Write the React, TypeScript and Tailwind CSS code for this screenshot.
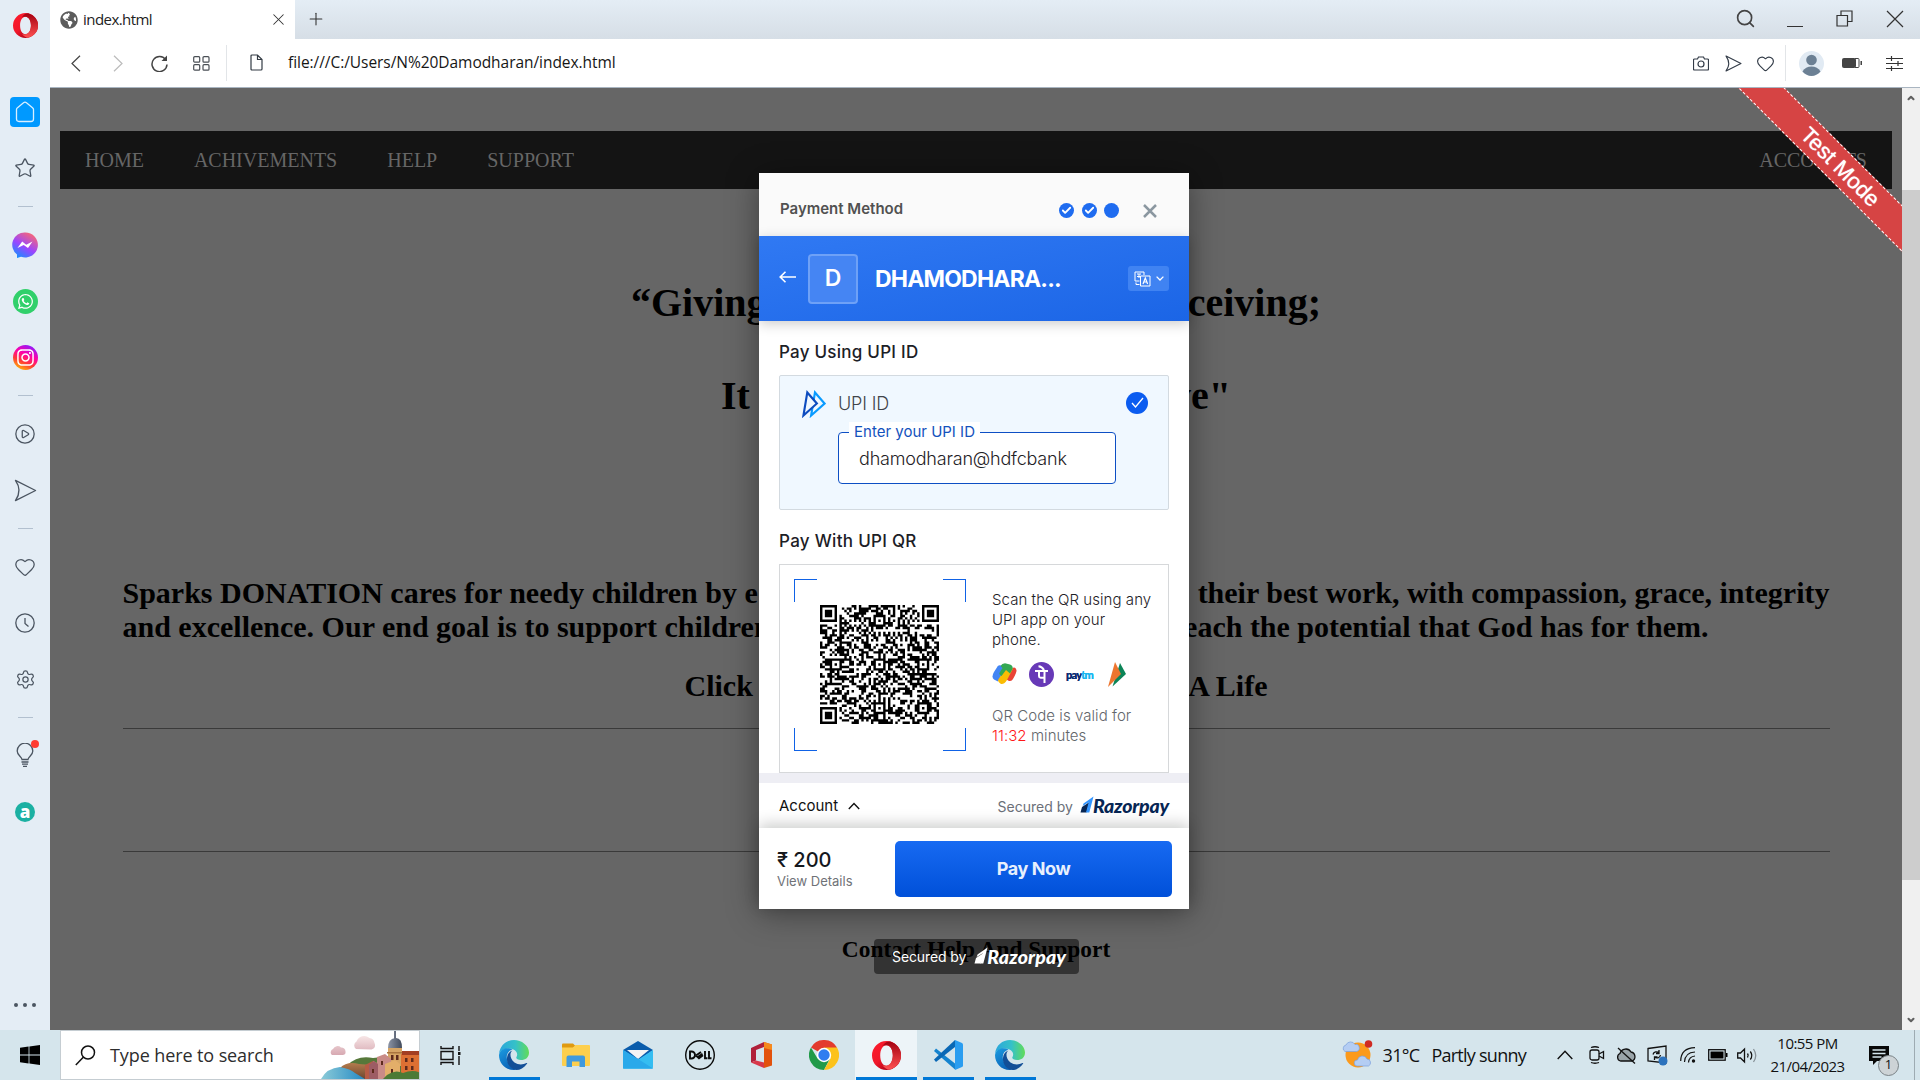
import React from "react";
import {
  Star, Heart, Settings, CirclePlay, Search, X, Plus,
  ChevronUp, ChevronDown, Check,
} from "lucide-react";
import { FaWhatsapp, FaInstagram, FaGlobeAmericas } from "react-icons/fa";

const QR_SIZE = 49;

function buildQr(): string {
  const grid: boolean[][] = [];
  let seed = 20230421;
  for (let y = 0; y < QR_SIZE; y++) {
    grid.push([]);
    for (let x = 0; x < QR_SIZE; x++) {
      seed = (seed * 1103515245 + 12345) % 2147483648;
      grid[y].push(((seed >> 13) & 1) === 1);
    }
  }
  const put = (x: number, y: number, on: boolean) => {
    if (x >= 0 && y >= 0 && x < QR_SIZE && y < QR_SIZE) grid[y][x] = on;
  };
  for (let i = 8; i < QR_SIZE - 8; i++) {
    put(i, 6, i % 2 === 0);
    put(6, i, i % 2 === 0);
  }
  for (const [cx, cy] of [[3, 3], [45, 3], [3, 45]]) {
    for (let dy = -4; dy <= 4; dy++)
      for (let dx = -4; dx <= 4; dx++) {
        const r = Math.max(Math.abs(dx), Math.abs(dy));
        put(cx + dx, cy + dy, r === 3 || r < 2);
      }
  }
  for (const [cx, cy] of [[24, 6], [6, 24], [24, 24], [42, 24], [24, 42], [42, 42]]) {
    for (let dy = -2; dy <= 2; dy++)
      for (let dx = -2; dx <= 2; dx++) put(cx + dx, cy + dy, Math.max(Math.abs(dx), Math.abs(dy)) !== 1);
  }
  let d = "";
  grid.forEach((row, y) => row.forEach((on, x) => { if (on) d += `M${x} ${y}h1v1h-1z`; }));
  return d;
}
const QR_PATH = buildQr();

const SendIcon = ({ s = 22, w = 1.5 }: { s?: number; w?: number }) => (
  <svg width={s} height={s} viewBox="0 0 24 24" fill="none" stroke="currentColor" strokeWidth={w} strokeLinejoin="round">
    <path d="M1.500 1.500 22.500 12 1.500 22.500Q9 12 1.500 1.500Z" />
  </svg>
);

function OperaLogo({ s, id }: { s: number; id: string }) {
  return (
    <svg width={s} height={s} viewBox="0 0 30 30">
      <defs>
        <linearGradient id={id} x1="0" x2="1" y1="0" y2="1">
          <stop offset="0" stopColor="#ff1b2d" /><stop offset="0.45" stopColor="#f0182a" /><stop offset="0.8" stopColor="#a70014" />
        </linearGradient>
        <linearGradient id={id + "r"} x1="0" x2="0" y1="0" y2="1">
          <stop offset="0" stopColor="#a30010" /><stop offset="1" stopColor="#ff5252" />
        </linearGradient>
      </defs>
      <path fillRule="evenodd" fill={`url(#${id})`} d="M15 0a15 15 0 1 0 0 30a15 15 0 1 0 0-30ZM15 4.500c4 0 6.500 4.500 6.500 10.500S19 25.500 15 25.500 8.500 21 8.500 15 11 4.500 15 4.500Z" />
      <path fill={`url(#${id}r)`} d="M15 4.500c9 1 8.500 20 0 21 -2 .3-3.500-.3-4.500-1C13 28.500 17 30 19 29.500A15 15 0 0 0 19 .500C16 0 13 1.500 10.500 5.500c1-.8 2.500-1.300 4.500-1Z" />
    </svg>
  );
}

function Edge({ id }: { id: string }) {
  return (
    <svg width="30" height="30" viewBox="0 0 30 30">
      <defs>
        <linearGradient id={id + "a"} x1="0" x2="1"><stop offset="0" stopColor="#2ba6dc" /><stop offset=".55" stopColor="#35c1c8" /><stop offset="1" stopColor="#62dc58" /></linearGradient>
        <linearGradient id={id + "b"} x1="0" x2=".6" y1="0" y2="1"><stop offset="0" stopColor="#1b9de2" /><stop offset="1" stopColor="#0a5fb4" /></linearGradient>
      </defs>
      <path fill={`url(#${id}a)`} d="M0 14C1 5 7.500 0 15 0s15 5.500 15 12.500c0 5-3.500 7.500-8 7.500-3.500 0-5.500-1.500-4.500-3 1.500-2.500.5-6-3-7.500C9 7 2 9.500 0 14Z" />
      <path fill={`url(#${id}b)`} d="M0 15C1 9 8 6.500 13.500 9.500c-5 1.500-7 6-5 11.500C10.500 27 16 30 19 29.500 8 32 0 24.500 0 15Z" />
      <path fill="#134f97" d="M13.500 10.500c-3 1.500-3 8.500 2 12 3.500 2.500 8.500 2.500 12 .5.500-.3 1 0 .5.700C25 28 21 30 17.500 30 10 29 6.500 21.500 8.500 15.500c.8-2.500 3-4.500 5-5Z" />
    </svg>
  );
}

const Razorpay = ({ dark }: { dark?: boolean }) => (
  <span className="flex items-center">
    <svg width="14" height="17" viewBox="0 0 13 17" className="mb-[3px]">
      <path d="M0 16.500 1.500 11 9 6 6 16.500Z" fill={dark ? "#072654" : "#fff"} />
      <path d="M3 7.500 13 .5 8.800 16.500H5.500L8.200 6.200 2.200 10Z" fill={dark ? "#3395ff" : "#fff"} />
    </svg>
    <span className={(dark ? "text-[#072654] tracking-[-0.2px] " : "text-white tracking-[0.15px] ") + "-ml-px font-['Lato'] text-[19.500px] leading-none font-black italic"}>Razorpay</span>
  </span>
);

const Slot = ({ children }: { children: React.ReactNode }) => (
  <div className="flex h-14 w-full shrink-0 items-center justify-center">{children}</div>
);
const Rule = () => (
  <div className="flex h-[21px] w-full shrink-0 items-center justify-center"><div className="h-px w-[15px] bg-[#b2c0cf]" /></div>
);

function Sidebar() {
  return (
    <aside className="flex w-[50px] shrink-0 flex-col items-center bg-[#e4edf5] text-[#4b5561]">
      <div className="flex h-[84px] pt-[13px]"><OperaLogo s={25} id="op1" /></div>
      <Slot>
        <div className="flex size-[30px] items-center justify-center rounded-[4px] bg-[#0099ff]">
          <svg width="20" height="22" viewBox="0 0 20 22" fill="none" stroke="#d9efff" strokeWidth="1.300"><path d="M1.500 8.500Q1.500 7.500 2.500 6.700L8.500 1.700Q10 .7 11.500 1.700L17.500 6.700Q18.500 7.500 18.500 8.500V18Q18.500 20.500 16 20.500H4Q1.500 20.500 1.500 18Z" /></svg>
        </div>
      </Slot>
      <Slot><Star size={22} strokeWidth={1.4} /></Slot>
      <Rule />
      <Slot>
        <svg width="26" height="26" viewBox="0 0 26 26">
          <defs><linearGradient id="ms" x1=".2" x2=".8" y1="1" y2="0"><stop offset="0" stopColor="#1292ff" /><stop offset=".45" stopColor="#9a45ff" /><stop offset="1" stopColor="#ff6a6b" /></linearGradient></defs>
          <path fill="url(#ms)" d="M13 .5a12.500 12.500 0 1 1-4 24.200L5 26V22.500A12.300 12.300 0 0 1 13 .5Z" />
          <path fill="#fff" d="m5.500 16 4.700-6.500 4 3.200L20.500 9.500 16 16l-4.300-3Z" />
        </svg>
      </Slot>
      <Slot><div className="flex size-[25px] items-center justify-center rounded-full bg-[#31d06b] text-white"><FaWhatsapp size={17} /></div></Slot>
      <Slot><div className="flex size-[25px] items-center justify-center rounded-full bg-[linear-gradient(25deg,#ffc800_5%,#ff3a35_35%,#ff00a8_60%,#8b1cff_90%)] text-white"><FaInstagram size={19} /></div></Slot>
      <Rule />
      <Slot><CirclePlay size={22} strokeWidth={1.4} /></Slot>
      <Slot><SendIcon s={23} w={1.4} /></Slot>
      <Rule />
      <Slot><Heart size={22} strokeWidth={1.4} /></Slot>
      <Slot>
        <svg width="20" height="20" viewBox="0 0 20 20" fill="none" stroke="currentColor" strokeWidth="1.300"><circle cx="10" cy="10" r="9.200" /><path d="M10 5v5.500l3.500 3" /></svg>
      </Slot>
      <Slot><Settings size={21} strokeWidth={1.4} /></Slot>
      <Rule />
      <Slot>
        <div className="relative mb-[2px]">
          <svg width="18" height="24" viewBox="0 0 18 24" fill="none" stroke="currentColor" strokeWidth="1.300"><path d="M6 16.500C5.500 13.500 1.200 12.500 1.200 8a7.800 7.800 0 0 1 15.600 0c0 4.500-4.300 5.500-4.800 8.500ZM5.500 19h7M6 21.200h6M7 23.300h4" /></svg>
          <span className="absolute -top-[3px] -right-[5px] size-2 rounded-full bg-[#ff3b30]" />
        </div>
      </Slot>
      <Slot><div className="flex size-5 items-center justify-center rounded-full bg-[#1bb0a2] pb-[2px] font-['Open_Sans'] text-[17px] leading-none font-extrabold text-white">a</div></Slot>
      <div className="mt-auto flex gap-[5px] pb-[23px]">
        <i className="size-1 rounded-full bg-[#4b5561]" /><i className="size-1 rounded-full bg-[#4b5561]" /><i className="size-1 rounded-full bg-[#4b5561]" />
      </div>
    </aside>
  );
}

function BrowserTop() {
  return (
    <header className="shrink-0">
      <div className="flex h-[39px] bg-gradient-to-b from-[#e4edf5] to-[#d6dee6]">
        <div className="flex w-[245px] items-center bg-white pr-[7px] pl-[10px] text-[#333]">
          <FaGlobeAmericas size={18} color="#5c5c5c" />
          <span className="ml-[5px] font-['Open_Sans'] text-[15px] tracking-[-0.55px] text-[#222]">index.html</span>
          <X size={19} strokeWidth={1.3} className="ml-auto" />
        </div>
        <Plus size={20} strokeWidth={1.3} className="mt-[9px] ml-[11px] text-[#333]" />
        <div className="ml-auto flex items-start pr-[16px] text-[#444]">
          <Search size={21} strokeWidth={1.9} className="mt-2" />
          <div className="mt-[26px] ml-[31px] h-px w-4 bg-[#333]" />
          <svg width="17" height="17" viewBox="0 0 17 17" fill="none" stroke="#333" strokeWidth="1.200" className="mt-[10px] ml-[33px]"><path d="M1 5.500h10.500V16H1ZM5 5.500V1h11v10.500h-4.500" /></svg>
          <svg width="18" height="18" viewBox="0 0 18 18" stroke="#333" strokeWidth="1.200" className="mt-[10px] ml-[33px]"><path d="M1 1 17 17M17 1 1 17" /></svg>
        </div>
      </div>
      <div className="flex h-[49px] items-center border-b border-[#a9b5c1] bg-white text-[#4a4f55]">
        <svg width="10" height="17" viewBox="0 0 10 17" fill="none" stroke="#444" strokeWidth="1.200" className="ml-[21px]"><path d="M9 .7 1 8.500 9 16.300" /></svg>
        <svg width="10" height="17" viewBox="0 0 10 17" fill="none" stroke="#bbb" strokeWidth="1.200" className="ml-[32px]"><path d="M1 .7 9 8.500 1 16.300" /></svg>
        <svg width="17" height="17" viewBox="0 0 17 17" fill="none" stroke="#444" strokeWidth="1.500" className="ml-[28px]"><path d="M14.800 5A7.500 7.500 0 1 0 16 9.500" /><path d="M16 .5V6h-5.500Z" fill="#444" stroke="none" /></svg>
        <svg width="17" height="15" viewBox="0 0 17 15" fill="none" stroke="#4a4f55" strokeWidth="1.200" className="ml-[25px]"><rect x=".7" y=".7" width="6" height="5.500" rx="1" /><rect x="10" y=".7" width="6" height="5.500" rx="1" /><rect x=".7" y="8.700" width="6" height="5.500" rx="1" /><rect x="10" y="8.700" width="6" height="5.500" rx="1" /></svg>
        <div className="ml-4 h-[36px] w-px bg-[#e2e5e8]" />
        <svg width="13" height="17" viewBox="0 0 13 17" fill="none" stroke="#333b44" strokeWidth="1.200" className="mb-[2px] ml-[23px]"><path d="M1 2Q1 1 2 1H7.500L12 5.500V15q0 1-1 1H2q-1 0-1-1ZM7.500 1v4.500H12" /></svg>
        <span className="ml-[25px] font-['Open_Sans'] text-[15.500px] tracking-[-0.05px] text-[#161616]">file:///C:/Users/N%20Damodharan/index.html</span>
        <div className="ml-auto flex items-center text-[#323b47]">
          <svg width="16" height="15" viewBox="0 0 16 15" fill="none" stroke="currentColor" strokeWidth="1.200"><path d="M1.500 3H4.500L5.500 1h5l1 2h3q1 0 1 1v9q0 1-1 1h-13q-1 0-1-1V4q0-1 1-1Z" /><circle cx="8" cy="8" r="3" /></svg>
          <span className="ml-4"><SendIcon s={17} w={1.6} /></span>
          <Heart size={19} strokeWidth={1.4} className="ml-[14px]" />
          <div className="ml-[10px] h-[36px] w-px bg-[#e2e5e8]" />
          <svg width="25" height="25" viewBox="0 0 25 25" className="ml-[13px]"><circle cx="12.500" cy="12.500" r="12.500" fill="#e1eaf3" /><circle cx="12.500" cy="9" r="5.300" fill="#6c8094" /><path d="M3.500 20.500Q6.500 15.500 12.500 15.500t9 5q-4 4.300-9 4.500-5-.2-9-4.500Z" fill="#6c8094" /></svg>
          <svg width="21" height="12" viewBox="0 0 21 12" className="ml-[18px]"><rect x="0" y="1" width="14" height="10" rx="2" fill="#444" /><path d="M13 1.500h3q1 0 1 1v7q0 1-1 1h-3" fill="none" stroke="#444" /><rect x="18.500" y="4" width="1.500" height="4" fill="#444" /></svg>
          <svg width="17" height="15" viewBox="0 0 17 15" stroke="#333" strokeWidth="1.200" className="mr-[17px] ml-[23px]"><path d="M0 2.500h17M0 7.500h17M0 12.500h17M5.500 0v5M12 5v5M5.500 10v5" /></svg>
        </div>
      </div>
    </header>
  );
}

function StepDot({ done }: { done?: boolean }) {
  return <span className="flex size-[15px] items-center justify-center rounded-full bg-[#1f6cf0] text-white">{done && <Check size={11} strokeWidth={4} />}</span>;
}

const Corner = ({ c }: { c: string }) => <i className={"size-[23px] border-[#0f62e6] " + c} />;

function Dialog() {
  return (
    <div className="absolute top-[85px] left-[709px] flex h-[736px] w-[430px] flex-col bg-white font-['Inter'] font-normal shadow-[0_4px_30px_rgba(0,0,0,0.4)]">
      <div className="flex h-[63px] shrink-0 items-center bg-[#fafafa] pr-[32px] pl-[21px]">
        <span className="mt-[9px] text-[15px] font-semibold tracking-[0px] text-[#515151]">Payment Method</span>
        <div className="mt-[12px] ml-auto flex gap-[7.500px]"><StepDot done /><StepDot done /><StepDot /></div>
        <svg width="14" height="14" viewBox="0 0 14 14" stroke="#8b97a0" strokeWidth="2.500" className="mt-[12px] ml-[24px]"><path d="M1 1 13 13M13 1 1 13" /></svg>
      </div>
      <div className="relative z-10 flex h-[85px] shrink-0 items-center bg-gradient-to-br from-[#3079f3] to-[#1b65e6] px-[20px] text-white shadow-[0_3px_12px_rgba(0,0,0,0.2)]">
        <svg width="17" height="12" viewBox="0 0 17 12" fill="none" stroke="#fff" strokeWidth="1.600" className="mb-[3px]"><path d="M17 6H1.500M6.500 .8 1.200 6l5.300 5.200" /></svg>
        <div className="ml-[12px] flex size-[50px] items-center justify-center rounded-[4px] border-2 border-[#6ea1f7] bg-[#4585f3] text-[23px] font-semibold">D</div>
        <span className="mt-px ml-[17px] text-[23px] font-bold tracking-[-0.8px]">DHAMODHARA...</span>
        <div className="ml-auto flex h-[25px] w-[41px] items-center justify-center gap-[5px] rounded-[3px] bg-[#4083f2]">
          <svg width="17" height="16" viewBox="0 0 17 16" fill="none" stroke="#fff" strokeWidth="1"><path d="M5.500 10H1V1h9v3M3 3h4M3 5.500h3M5 3v4M2 11.500v2h3.500" /><path d="M6.500 5h9.500v10H6.500Z" /><path d="M9 13l2.300-6 2.300 6M9.800 11h3" strokeWidth="1.200" /></svg>
          <svg width="8" height="5" viewBox="0 0 8 5" fill="none" stroke="#fff" strokeWidth="1.300"><path d="M.6.600 4 4 7.400.6" /></svg>
        </div>
      </div>
      <div className="flex h-[452px] shrink-0 flex-col px-[20px]">
        <h2 className="mt-[19px] h-[24px] text-[17px] leading-6 font-medium tracking-[0.25px] text-[#1c2026]">Pay Using UPI ID</h2>
        <div className="relative mt-[11px] h-[135px] rounded-[2px] border border-[#d3dae0] bg-[#f0f8ff]">
          <div className="flex h-[55px] items-center pr-[20px] pl-[22px]">
            <svg width="24" height="28" viewBox="0 0 25 28" fill="none" strokeWidth="2.200"><path d="M9.500 26 13.500 2 23.500 13.500Z" stroke="#0a9bff" /><path d="M1.500 26 5.500 2 15.500 13.500Z" stroke="#0d4cbf" fill="#f0f8ff" /></svg>
            <span className="ml-[12px] text-[18px] font-light tracking-[-0.15px] text-[#414449]">UPI ID</span>
            <span className="mb-[2px] ml-auto flex size-[22px] items-center justify-center rounded-full bg-[#0b5cf0] text-white"><svg width="13" height="11" viewBox="0 0 13 11" fill="none" stroke="#fff" strokeWidth="1.300"><path d="M1 6 4.500 10 12 1" /></svg></span>
          </div>
          <div className="relative mt-px ml-[58px] flex h-[52px] w-[278px] items-center rounded-[4px] border border-[#0d4fc4] bg-white pl-[20px] text-[18px] font-light tracking-[-0.2px] text-[#1f2226]">
            dhamodharan@hdfcbank
            <span className="absolute -top-[11px] left-[10px] w-[131px] bg-white text-center text-[15px] leading-5 font-normal tracking-normal text-[#1352bd]">Enter your UPI ID</span>
          </div>
        </div>
        <h2 className="mt-[19px] h-[24px] text-[17px] leading-6 font-medium tracking-[0.3px] text-[#1c2026]">Pay With UPI QR</h2>
        <div className="mt-[11px] flex h-[209px] border border-[#d6d8da]">
          <div className="mt-[14px] ml-[14px] grid size-[172px] shrink-0 grid-cols-[23px_126px_23px] grid-rows-[23px_126px_23px] place-items-center">
            <Corner c="border-t border-l" /><span /><Corner c="border-t border-r" />
            <span />
            <svg width="119" height="119" viewBox="0 0 49 49" className="mr-[2px] mb-[2px]"><path d={QR_PATH} /></svg>
            <span />
            <Corner c="border-b border-l" /><span /><Corner c="border-r border-b" />
          </div>
          <div className="ml-[26px] pt-[25px] text-[15px] leading-5 font-light tracking-[0.06px] text-[#1d2126]">
            <p>Scan the QR using any<br />UPI app on your<br />phone.</p>
            <div className="mt-[11px] flex h-[26px] items-center">
              <svg width="25" height="22" viewBox="0 0 25 22"><path d="M2 9 5.500 3.500Q7 1.500 9 2.500L14 5 9 14 6 18.500 2 16.500Q-1 14 2 9Z" fill="#4285f4" /><path d="M16 12 20 5.500Q23 3 24.500 7 25 9 21 16 19.500 19 16 17.500L13 15Z" fill="#ea4335" /><path d="M6 17 15 3 21 5.500 15 17Q12.500 21.500 9 21 6 19.500 6 17Z" fill="#fbbc04" /><path d="M8.500 3Q10 .3 13 .3L18 1.500Q21.500 3 20.500 6L18 10.500 14 7 9.500 13Q6 11 8 9L10.500 5Z" fill="#34a853" /></svg>
              <span className="ml-[12px] flex size-[25px] items-center justify-center rounded-full bg-[#6739b7]"><svg width="13" height="19" viewBox="0 0 13 19" fill="none" stroke="#fff" strokeWidth="2"><path d="M0 6h13M9.500 6v12M4 7v4q0 2.500 5 1.500M9 5Q7 1.500 3.500 1.300" /></svg></span>
              <span className="ml-[12px] w-[26px] font-['Lato'] text-[11px] leading-none font-black tracking-[-0.8px] text-[#0a2b72] [text-shadow:0_0_0.5px_currentColor]">pay<span className="text-[#19b6f0]">tm</span></span>
              <svg width="18" height="25" viewBox="0 0 18 25" className="ml-[16px]"><path d="M12 1 18 12 4.500 24.500 Z" fill="#0b8457" /><path d="M7 0 13 12 0 25Z" fill="#ed752e" /></svg>
            </div>
            <p className="mt-[19px] text-[#62666b]">QR Code is valid for<br /><span className="text-[#ff1717]">11:32</span> minutes</p>
          </div>
        </div>
      </div>
      <div className="h-[10px] shrink-0 bg-[#eeeef4]" />
      <div className="flex h-[45px] shrink-0 items-center px-[20px] pt-px text-[15px] text-[#111]">
        Account
        <svg width="12" height="8" viewBox="0 0 12 8" fill="none" stroke="#111" strokeWidth="1.400" className="ml-[10px]"><path d="M.8 7 6 1.500 11.200 7" /></svg>
        <span className="mr-[7px] ml-auto text-[14px] text-[#6b7079]">Secured by</span><Razorpay dark />
      </div>
      <div className="relative flex flex-1 items-center bg-white pr-[17px] pl-[18px] shadow-[0_-4px_14px_rgba(0,10,0,0.2)]">
        <div className="pt-[2px]">
          <p className="text-[20px] leading-[22px] font-medium text-[#15181d]">₹ 200</p>
          <p className="mt-px text-[13px] leading-[18px] text-[#6f7277]">View Details</p>
        </div>
        <div className="ml-auto flex h-[56px] w-[277px] items-center justify-center rounded-[5px] bg-gradient-to-b from-[#176af2] to-[#0150d9] text-[18px] font-bold tracking-[-0.4px] text-[#e8f0fd]">Pay Now</div>
      </div>
    </div>
  );
}

function Page() {
  return (
    <div className="flex min-h-0 flex-1">
      <main className="relative flex w-[1852px] flex-col items-center overflow-hidden bg-[#666] pt-[43px] pr-[10px] pl-[10px] font-['Liberation_Serif'] font-bold text-black">
        <nav className="flex h-[58px] w-full shrink-0 items-center gap-[50px] bg-[#141414] px-[25px] text-[20px] font-normal text-[#666]">
          <span>HOME</span><span>ACHIVEMENTS</span><span>HELP</span><span>SUPPORT</span><span className="ml-auto">ACCOUNTS</span>
        </nav>
        <h1 className="mt-[91px] flex h-[46px] w-[690px] justify-between text-[40px] leading-[46px] whitespace-nowrap"><span>“Giving</span><span>ceiving;</span></h1>
        <h1 className="mt-[47px] flex h-[46px] w-[510px] justify-between text-[40px] leading-[46px] whitespace-nowrap"><span>It</span><span>ve"</span></h1>
        <div className="mt-[157px] w-[1707px] text-[30px] leading-[34px] whitespace-nowrap">
          <p className="flex justify-between"><span>Sparks DONATION cares for needy children by e</span><span>their best work, with compassion, grace, integrity</span></p>
          <p className="flex w-[1586px] justify-between"><span>and excellence. Our end goal is to support children</span><span>each the potential that God has for them.</span></p>
        </div>
        <p className="mt-[25px] flex h-[34px] w-[583px] justify-between text-[30px] leading-[34px] whitespace-nowrap"><span>Click</span><span>A Life</span></p>
        <div className="mt-[25px] h-px w-[1707px] bg-[#3a3a3a]" />
        <div className="mt-[122px] h-px w-[1707px] bg-[#3a3a3a]" />
        <h3 className="mt-[84px] text-[23.400px] leading-[27px]">Contact Help And Support</h3>

        <div className="absolute top-[851px] left-[824px] flex h-[35px] w-[205px] items-center rounded-[4px] bg-black/50 pl-[18px] font-['Inter'] text-[14px] font-normal tracking-[-0.1px] text-white">
          <span className="mr-[8px]">Secured by</span><Razorpay />
        </div>
        <div className="absolute top-[61px] left-[1629px] flex h-[33px] w-[320px] rotate-45 items-center justify-center border-y border-dashed border-white bg-[#d64444] pl-[4px] font-['Liberation_Sans'] text-[22px] leading-none font-normal text-white [text-shadow:0_0_1px_#fff]">Test Mode</div>
        <Dialog />
      </main>
      <div className="flex w-[18px] flex-col items-center bg-[#f0f0f0] py-[5px]">
        <ChevronUp size={10} strokeWidth={5} className="text-[#606060]" />
        <div className="mt-[87px] h-[690px] w-full bg-[#cdcdcd]" />
        <ChevronDown size={10} strokeWidth={5} className="mt-auto text-[#606060]" />
      </div>
    </div>
  );
}

const TaskButton = ({ children, open, active }: { children: React.ReactNode; open?: boolean; active?: boolean }) => (
  <div className={"flex h-[50px] w-[62px] flex-col items-center " + (active ? "bg-[#edf4f8]" : "")}>
    <div className="flex h-[47px] items-center pt-[3px]">{children}</div>
    {open && <div className={"h-[3px] bg-[#0078d7] " + (active ? "w-[61px]" : "w-[51px]")} />}
  </div>
);

function Taskbar() {
  return (
    <footer className="flex h-[50px] shrink-0 items-center bg-[#d5e5ec] font-['Open_Sans'] text-[#111]">
      <svg width="20" height="20" viewBox="0 0 20 20" className="ml-[20px]"><path d="M0 2.800 8.600 1.500V9.600H0ZM9.400 1.400 20 0V9.600H9.400ZM0 10.400H8.600V18.500L0 17.200ZM9.400 10.400H20V20L9.400 18.600Z" /></svg>
      <div className="ml-[20px] flex h-[50px] w-[360px] items-center overflow-hidden border border-[#c5cdd2] bg-white">
        <svg width="21" height="21" viewBox="0 0 21 21" fill="none" stroke="#111" strokeWidth="1.500" className="ml-[14px]"><circle cx="13" cy="7.500" r="6.500" /><path d="M8.500 12 .8 20" /></svg>
        <span className="ml-[14px] text-[18px] tracking-[-0.1px] text-[#2d2d2d]">Type here to search</span>
        <svg width="98" height="48" viewBox="0 0 98 48" className="ml-auto">
          <defs>
            <linearGradient id="sea" x1="0" x2="1"><stop offset="0" stopColor="#8ccbd8" /><stop offset="1" stopColor="#2489c4" /></linearGradient>
            <linearGradient id="cl" x1="0" x2="0" y1="0" y2="1"><stop offset="0" stopColor="#f7e6e6" /><stop offset="1" stopColor="#d7a9b2" /></linearGradient>
            <linearGradient id="rk" x1="0" x2="0" y1="0" y2="1"><stop offset="0" stopColor="#b47b4d" /><stop offset="1" stopColor="#6d4630" /></linearGradient>
            <linearGradient id="dome" x1="0" x2="1"><stop offset="0" stopColor="#8d95a6" /><stop offset="1" stopColor="#414a5b" /></linearGradient>
          </defs>
          <path fill="url(#cl)" d="M11 24a3.500 3.500 0 0 1 1-6 5 5 0 0 1 8-1.500 4 4 0 0 1 4.500 4q.5 3.500-3 3.500ZM35 18a4.500 4.500 0 0 1 .5-7.500 8 8 0 0 1 13-3.500 6 6 0 0 1 5 5q2 5-3 6.500Z" />
          <path fill="#56783a" d="M27 34Q36 24 52 27L70 25 100 26V48H46Z" />
          <path fill="url(#rk)" d="M19 37Q26 30 38 33L50 34V48H30Z" />
          <path fill="url(#sea)" d="M0 48Q6 37 19 36 30 38 34 42L44 48Z" />
          <path fill="url(#dome)" d="M67 17Q67 8 74 7T81 17ZM73 0h2v8h-2Z" />
          <path fill="#d6a565" d="M67 17h14v18H67Z" /><path fill="#a9743f" d="M66 21h16v1.500H66Z" />
          <path fill="#b65b45" d="M44 34l8-4 7 5v13H44Z" /><path fill="#d59a78" d="M52 30l8 4v14h-8Z" />
          <path fill="#c98b87" d="M56 26l8-3 6 5v20H56Z" /><path fill="#9d5c64" d="M48 34l5-4 4 3v15h-9Z" /><path fill="#e3ae69" d="M64 33l10-4 5 4v15H64Z" />
          <path fill="#dd7033" d="M80 23h20v19H80Z" /><path fill="#a33f22" d="M81 20h17v4H81Z" />
          <path fill="#5e2a1c" d="M70 24h2.500v5H70Zm5 0h2.500v5H75ZM84 27h2.500v4H84Zm6 0h2.500v4H90Zm-6 8h2.500v4H84Zm6 0h2.500v4H90ZM60 30h2v4h-2Zm-9 8h2v4h-2Zm19 0h2v4h-2Z" />
          <path fill="#4c7a35" d="M66 44Q74 38 82 42 92 38 100 42V48H62Z" />
        </svg>
      </div>
      <svg width="21" height="19" viewBox="0 0 21 19" fill="none" stroke="#111" strokeWidth="1.400" className="ml-[20px]"><path d="M1 0v2.500h12V0M1 19v-2.500h12V19M1 5.500h12v8H1ZM19 0v5M19 10v9" /><path d="M18 6h2.500v3H18Z" fill="#111" stroke="none" /></svg>
      <div className="ml-[22px] flex">
        <TaskButton open><Edge id="e1" /></TaskButton>
        <TaskButton><svg width="28" height="24" viewBox="0 0 28 24"><path d="M0 1.500Q0 .5 1 .5H11L13.500 3 11 5H0Z" fill="#e09a10" /><path d="M0 4.500H11L13.500 2H27q1 0 1 1V22q0 1-1 1H1q-1 0-1-1Z" fill="#fdcf4e" /><path d="M4.500 24V14.500q0-2 2-2H21q2 0 2 2V24H17.500V18.500H10V24Z" fill="#3f9adf" /></svg></TaskButton>
        <TaskButton><svg width="30" height="28" viewBox="0 0 30 28"><path d="M0 9 15 0 30 9 15 20Z" fill="#0a5cab" /><path d="M4 9H26L15 18Z" fill="#f4f4f4" /><path d="M0 9 30 27.500H1q-1 0-1-1Z" fill="#2fb0ee" /><path d="M30 9V26q0 1.500-1 1.500H0L16 18Z" fill="#35bdf1" /><path d="M0 9 15 18 30 27.500H0Z" fill="#2aa9ea" /></svg></TaskButton>
        <TaskButton><svg width="30" height="30" viewBox="0 0 30 30" fill="none" stroke="#0b0b0b"><circle cx="15" cy="15" r="14.300" strokeWidth="1.400" /><path d="M5 11.500v7h1.500a3.500 3.500 0 0 0 0-7ZM11 15.500l5-3.500M12.500 17.200l5-3.500M11 15.500l3 2.800 4-3M20 11v7.300h2.500M24 11v7.300h2.500" strokeWidth="1.900" /></svg></TaskButton>
        <TaskButton><svg width="22" height="26" viewBox="0 0 22 26"><path d="M0 6 13 0V5L5 8V18.500L0 20.500Z" fill="#b0203a" /><path d="M13 0 21 2.500V23.500L13 26V5Z" fill="#e2520d" /><path d="M13 0 21 2.500V8L13 6Z" fill="#f7891c" /><path d="M0 20.500 5 18.500 13 20.500V26Z" fill="#d8384a" /></svg></TaskButton>
        <TaskButton><svg width="30" height="30" viewBox="0 0 30 30"><path d="M15 15 2 7.500A15 15 0 0 1 28 7.500Z" fill="#e33b2e" /><path d="M2 7.500A15 15 0 0 0 15 30L21 18.500 15 15 8.500 18.500Z" fill="#219a49" /><path d="M15 30A15 15 0 0 0 28 7.500H15L21.500 18.500Z" fill="#fcc21b" /><circle cx="15" cy="15" r="7.200" fill="#fff" /><circle cx="15" cy="15" r="5.700" fill="#2f7df0" /></svg></TaskButton>
        <TaskButton open active><OperaLogo s={29} id="op2" /></TaskButton>
        <TaskButton open><svg width="30" height="30" viewBox="0 0 30 30"><path d="M1 11 3 8.500 22 23.500V29.500Z" fill="#1483cf" /><path d="M1 19.500 3 22 22 7V0Z" fill="#0a68b5" /><path d="M22 0 29 3q1 .5 1 1.500V25.500q0 1-1 1.500L22 30Z" fill="#2a9df0" /></svg></TaskButton>
        <TaskButton open><Edge id="e2" /></TaskButton>
      </div>
      <div className="ml-auto flex h-full items-center">
        <svg width="31" height="30" viewBox="0 0 31 30"><circle cx="16" cy="15" r="12.500" fill="#fb9a1c" /><path d="M3 11.500a3.500 3.500 0 0 1 1-6.500 5 5 0 0 1 9-.5 3.500 3.500 0 0 1 1.500 7ZM15 26a3 3 0 0 1 .5-6 5 5 0 0 1 9.500-1 3.700 3.700 0 0 1 1.500 7Z" fill="#b4cdf3" stroke="#7ba0dc" strokeWidth=".7" /><circle cx="26.500" cy="4" r="3.800" fill="#cf2a22" /></svg>
        <span className="ml-[10px] text-[18px] tracking-[-0.7px]">31°C</span>
        <span className="ml-[12px] text-[18px] tracking-[-0.75px]">Partly sunny</span>
        <svg width="16" height="10" viewBox="0 0 16 10" fill="none" stroke="#111" strokeWidth="1.400" className="ml-[31px]"><path d="M.7 9 8 1.200 15.300 9" /></svg>
        <svg width="16" height="18" viewBox="0 0 16 18" fill="none" stroke="#111" strokeWidth="1.300" className="ml-[16px]"><rect x="1" y="4" width="9" height="10" rx="2" /><path d="M10 8 14.500 5.500v7L10 10M2 1.500Q6 0 10 1.500M2 16.500Q6 18 10 16.500" /></svg>
        <svg width="21" height="17" viewBox="0 0 21 17" fill="none" stroke="#111" strokeWidth="1.300" className="ml-[11px]"><path d="M4.500 14a4 4 0 0 1-.5-7.500A6 6 0 0 1 15 5a4.700 4.700 0 0 1 1 9Z" fill="#9aa4a9" /><path d="M2 1 19 16.500" /></svg>
        <svg width="21" height="21" viewBox="0 0 21 21" fill="none" stroke="#111" strokeWidth="1.300" className="ml-[10px]"><path d="M1 3.500 19 1V18L1 16ZM6 9.500a3.500 3.500 0 0 1 6-1.500M12 5v3.500H9M13.500 10a3.500 3.500 0 0 1-6 1.800M7.500 15v-3.200h3" /><circle cx="16" cy="16" r="4.500" fill="#2b72bd" stroke="none" /></svg>
        <svg width="16" height="16" viewBox="0 0 16 16" fill="none" stroke="#111" strokeWidth="1.200" className="ml-[12px]"><path d="M.7 14Q1 1 15 .7M4.500 15Q5 5.500 15 5M8.500 15.500Q9 9.500 15 9" /><circle cx="13.500" cy="14" r="1.700" fill="#111" stroke="none" /></svg>
        <svg width="20" height="12" viewBox="0 0 20 12" className="ml-[12px]"><rect x=".7" y=".7" width="16.500" height="10.500" fill="none" stroke="#111" strokeWidth="1.300" /><path d="M2.500 2.500h13v7h-13ZM18 4h1.500v4H18Z" /></svg>
        <svg width="20" height="17" viewBox="0 0 20 17" fill="none" stroke="#111" strokeWidth="1.300" className="ml-[9px]"><path d="M.7 6H3.500L7.500 2V15L3.500 11H.7ZM10.500 6.500q1.500 2 0 4M13.300 4.500q3 4 0 8" /><path d="M16.500 2q4.500 6.500 0 13" stroke="#889298" /></svg>
        <div className="ml-[13px] flex w-[75px] flex-col items-center text-[15px] leading-[23px] tracking-[-0.55px] whitespace-nowrap">
          <span>10:55 PM</span><span>21/04/2023</span>
        </div>
        <div className="relative ml-[24px]">
          <svg width="20" height="19" viewBox="0 0 20 19"><path d="M0 0H20V15H8L4 19V15H0Z" fill="#080808" /><path d="M3.500 4h13M3.500 7.500h13M3.500 11h9" stroke="#d5e5ec" strokeWidth="1.300" /></svg>
          <span className="absolute top-[9px] left-[9px] flex size-[21px] items-center justify-center rounded-full border border-[#7a8286] bg-[#cdd3d6] text-[13px]">1</span>
        </div>
        <div className="mr-[5px] ml-[25px] h-full w-px bg-[#9eabb2]" />
      </div>
    </footer>
  );
}

export default function App() {
  return (
    <div className="flex h-[1080px] w-[1920px] flex-col overflow-hidden">
      <div className="flex min-h-0 flex-1">
        <Sidebar />
        <div className="flex min-w-0 flex-1 flex-col">
          <BrowserTop />
          <Page />
        </div>
      </div>
      <Taskbar />
    </div>
  );
}
